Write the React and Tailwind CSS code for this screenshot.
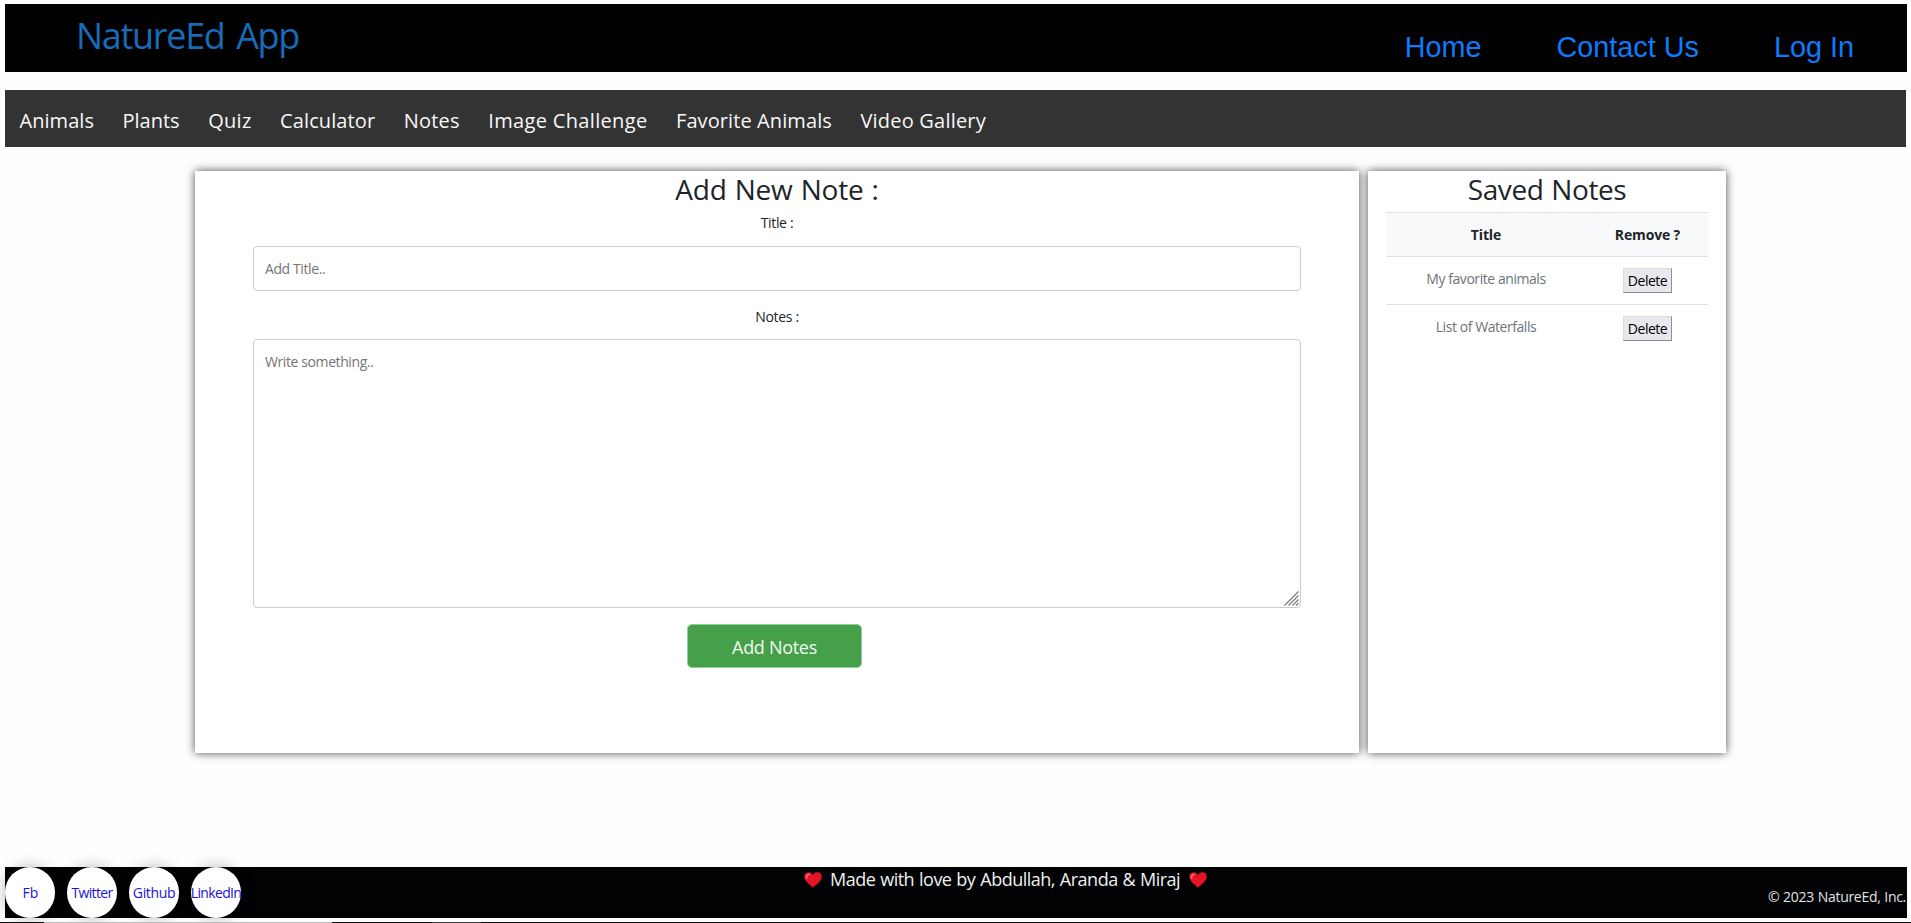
const navLinks = [
  { label: "Animals", cls: "tracking-[0.05px]" },
  { label: "Plants", cls: "" },
  { label: "Quiz", cls: "tracking-[0.3px]" },
  { label: "Calculator", cls: "tracking-[0.1px]" },
  { label: "Notes", cls: "tracking-[0.2px]" },
  { label: "Image Challenge", cls: "tracking-[0.34px]" },
  { label: "Favorite Animals", cls: "tracking-[0.1px]" },
  { label: "Video Gallery", cls: "tracking-[0.2px]" },
];

const savedNotes = ["My favorite animals", "List of Waterfalls"];

const socials = [
  { label: "Fb", cls: "pl-px" },
  { label: "Twitter", cls: "tracking-[-0.65px]" },
  { label: "Github", cls: "tracking-[-0.35px]" },
  { label: "LinkedIn", cls: "tracking-[-0.65px]" },
];

function Header() {
  return (
    <header className="flex h-[68px] w-[1902px] items-start justify-between bg-black pl-[71px] pr-[53px]">
      <h1 className="pt-px text-[36px] leading-[62px] tracking-[-1.3px] text-[#176bb9] [word-spacing:3.5px]">NatureEd App</h1>
      <nav className="mt-[18px] flex gap-[75px] font-['Liberation_Sans',Arial,sans-serif] text-[28.8px] leading-[50px] text-[#0d7bfb]">
        <a>Home</a>
        <a>Contact Us</a>
        <a>Log In</a>
      </nav>
    </header>
  );
}

function NavBar() {
  return (
    <nav className="mt-[18px] flex h-[57px] w-[1901px] gap-[28.5px] bg-[#333333] pl-[14.5px] pt-1 text-xl leading-[53px] text-[#f8f8f8]">
      {navLinks.map((l) => (
        <a key={l.label} className={l.cls}>
          {l.label}
        </a>
      ))}
    </nav>
  );
}

function NoteForm() {
  return (
    <section className="flex h-[582px] w-[1164px] flex-col bg-white px-[58px] text-center text-sm shadow-[0_0_9px_rgba(0,0,0,0.7)]">
      <h2 className="text-[28px] leading-9 tracking-[-0.2px] text-[#212529] [word-spacing:1px]">Add New Note :</h2>
      <label className="mt-1 leading-6 tracking-[-0.35px] text-[#212529]">Title :</label>
      <input
        className="mt-[11px] h-[45px] w-[1048px] rounded-[4px] border border-[#cccccc] px-[11px] tracking-[-0.4px] outline-none placeholder:text-[#757575]"
        placeholder="Add Title.."
      />
      <label className="mt-[14px] leading-6 tracking-[-0.3px] text-[#212529]">Notes :</label>
      <div className="relative mt-[10px] h-[269px] w-[1048px]">
        <textarea
          className="block h-full w-full resize-none rounded-[4px] border border-[#cccccc] px-[11px] py-3 leading-5 tracking-[-0.4px] outline-none placeholder:text-[#757575]"
          placeholder="Write something.."
        />
        <svg className="absolute bottom-[2px] right-[2px]" width="15" height="15" viewBox="0 0 15 15" stroke="#777777" strokeWidth="1.1">
          <path d="M0.5 14.5L14.5 0.5M4.5 14.5L14.5 4.5M8.5 14.5L14.5 8.5M12 14.5L14.5 12" />
        </svg>
      </div>
      <button className="mt-4 ml-[434px] h-11 w-[175px] rounded-[5px] border border-[#90d09a] bg-[#45a049] pt-px text-lg leading-10 tracking-[-0.3px] text-[#f4fbf4]">
        Add Notes
      </button>
    </section>
  );
}

function SavedNotes() {
  return (
    <section className="h-[582px] w-[358px] bg-white px-[18px] text-center text-sm shadow-[0_0_9px_rgba(0,0,0,0.7)]">
      <h2 className="text-[28px] leading-9 tracking-[-0.4px] text-[#212529] [word-spacing:1px]">Saved Notes</h2>
      <div className="mt-[5px] grid h-11 grid-cols-[200px_122px] items-center border-t border-[#dee2e6] bg-[#f8f9fb] font-bold tracking-[-0.15px] text-[#212529]">
        <span>Title</span>
        <span className="pl-px">Remove ?</span>
      </div>
      {savedNotes.map((note) => (
        <div key={note} className="grid h-12 grid-cols-[200px_122px] border-t border-[#dee2e6]">
          <span className="pt-[10px] leading-6 tracking-[-0.44px] text-[#6c757d]">{note}</span>
          <button className="ml-[37px] mt-[11px] h-[25px] w-[49px] border border-t-[#dcdce0] border-l-[#dcdce0] border-r-[#909094] border-b-[#85858a] bg-[#e9e9ed] leading-[23px] tracking-[-0.5px] text-black">
            Delete
          </button>
        </div>
      ))}
    </section>
  );
}

function Heart() {
  return (
    <svg className="mt-[5px] h-4 w-[18px] shrink-0" viewBox="0 0 18 16">
      <path
        d="M9 15.8C6.5 13.2 0.3 9.3 0.3 4.8C0.3 2 2.2 0.3 4.6 0.3C6.7 0.3 8.3 1.5 9 3.2C9.7 1.5 11.3 0.3 13.4 0.3C15.8 0.3 17.7 2 17.7 4.8C17.7 9.3 11.5 13.2 9 15.8Z"
        fill="#e81224"
      />
      <path d="M2.6 6C2.2 3.8 3.4 2.4 5.2 2.5" stroke="#f4737c" strokeWidth="1.6" strokeLinecap="round" fill="none" />
    </svg>
  );
}

function Footer() {
  return (
    <footer className="mt-[114px] flex h-[51px] w-[1902px] items-start bg-[#010203]">
      <div className="flex w-[799px] shrink-0 gap-3">
        {socials.map((s) => (
          <a
            key={s.label}
            className="flex h-[51px] w-[50px] shrink-0 items-center justify-center rounded-full bg-white text-sm text-[#1a12d8] shadow-[0_0_15px_rgba(0,0,0,0.3)]"
          >
            <span className={s.cls}>{s.label}</span>
          </a>
        ))}
      </div>
      <p className="flex text-lg leading-6 tracking-[-0.5px] text-[#f0f0f0] [word-spacing:0.7px]">
        <Heart />
        <span className="ml-2 mr-[9px]">Made with love by Abdullah, Aranda &amp; Miraj</span>
        <Heart />
      </p>
      <p className="ml-auto mr-px mt-[18px] text-sm leading-6 tracking-[-0.3px] text-[#e4e4e4] [word-spacing:0.5px]">
        © 2023 NatureEd, Inc.
      </p>
    </footer>
  );
}

export default function App() {
  return (
    <div className="flex h-[923px] w-[1911px] flex-col overflow-hidden whitespace-nowrap bg-[#fefefe] font-['Open_Sans','Noto_Sans',sans-serif]">
      <div className="px-[5px] pt-1">
        <Header />
        <NavBar />
        <main className="ml-[190px] mt-6 flex gap-[9px]">
          <NoteForm />
          <SavedNotes />
        </main>
        <Footer />
      </div>
      <div className="mt-auto flex h-px bg-[#101012]">
        <div className="ml-[44px] w-[288px] bg-[#bcbcbc]" />
        <div className="ml-[100px] w-[49px] bg-[#3a3a3a]" />
      </div>
    </div>
  );
}
